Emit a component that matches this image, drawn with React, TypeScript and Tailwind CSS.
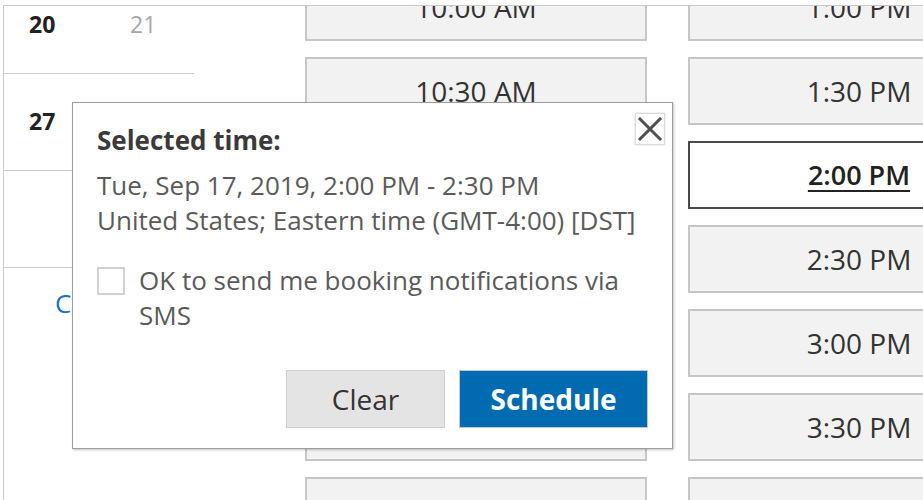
import React from 'react';

// Scheduler view: week grid on the left, time slot columns on the right,
// with the "selected time" confirmation popover laid over them.

const LEFT_SLOTS = ['10:00 AM', '10:30 AM', '11:00 AM', '11:30 AM', '12:00 PM', '12:30 PM', '1:00 PM'];
const RIGHT_SLOTS = ['1:00 PM', '1:30 PM', '2:00 PM', '2:30 PM', '3:00 PM', '3:30 PM', '4:00 PM'];
const SELECTED = '2:00 PM';

type Cell = { day?: number; muted?: boolean };

const WEEKS: Cell[][] = [
  [{ day: 20 }, { day: 21, muted: true }],
  [{ day: 27 }, { day: 28 }],
  [{}, {}],
];

function SlotButton({ label, selected }: { label: string; selected?: boolean }) {
  return (
    <button
      className={
        selected
          ? 'h-[68px] w-full shrink-0 border-2 border-[#4a4a4a] bg-white text-[27px] font-semibold text-[#222] underline underline-offset-[5px] decoration-[1.5px]'
          : 'h-[68px] w-full shrink-0 border-2 border-[#c6c6c6] bg-[#f2f2f2] text-[28px] text-[#333]'
      }
    >
      {label}
    </button>
  );
}

function SlotColumn({ slots }: { slots: string[] }) {
  return (
    <div className="-mt-[33px] flex w-[342px] shrink-0 flex-col gap-[16px]">
      {slots.map((s) => (
        <SlotButton key={s} label={s} selected={s === SELECTED} />
      ))}
    </div>
  );
}

function CloseIcon() {
  return (
    <svg width="26" height="24" viewBox="0 0 26 24" fill="none">
      <path d="M3 2 L23 22 M23 2 L3 22" stroke="#505050" strokeWidth="3" strokeLinecap="square" />
    </svg>
  );
}

function SelectedTimePopover() {
  return (
    <div className="absolute left-[72px] top-[102px] h-[347px] w-[601px] border border-[#9e9e9e] bg-white pl-[24px] pr-[24px] pt-[20px] shadow-[1px_1px_2px_rgba(0,0,0,0.25)]">
      <button className="absolute left-[562px] top-[10px] flex h-[32px] w-[30px] items-center justify-center border border-[#dcdcdc] bg-white shadow-[0_0_2px_rgba(0,0,0,0.18)]">
        <CloseIcon />
      </button>

      <div className="text-[26px] font-bold leading-[35px] text-[#3a3a3a]">Selected time:</div>

      <div className="mt-[10px] text-[26px] leading-[35px] text-[#5a5a5a]">
        <div>Tue, Sep 17, 2019, 2:00 PM - 2:30 PM</div>
        <div>United States; Eastern time (GMT-4:00) [DST]</div>
      </div>

      <label className="mt-[25px] flex items-start gap-[14px]">
        <span className="mt-[4px] h-[28px] w-[28px] shrink-0 border-2 border-[#d2d2d2] bg-white" />
        <span className="w-[508px] text-[26px] leading-[35px] text-[#5a5a5a]">
          OK to send me booking notifications via SMS
        </span>
      </label>

      <div className="mt-[37px] flex justify-end gap-[14px]">
        <button className="h-[58px] w-[159px] border border-[#cfcfcf] bg-[#e4e4e4] text-[28px] text-[#333]">
          Clear
        </button>
        <button className="h-[58px] w-[189px] border border-[#b9c9d8] bg-[#006bb0] text-[28px] font-bold text-white">
          Schedule
        </button>
      </div>
    </div>
  );
}

export default function App() {
  return (
    <div className="relative h-[500px] w-[923px] overflow-hidden bg-white font-['Open_Sans',sans-serif]">
      <div className="ml-[3px] mt-[5px] flex h-[495px] overflow-hidden border-l border-t border-[#cacaca]">
        {/* calendar weeks */}
        <div className="w-[301px] shrink-0">
          <div className="-mt-[29px] w-[190px]">
            {WEEKS.map((week, i) => (
              <div key={i} className="grid h-[97px] grid-cols-[101px_89px] border-b border-[#cacaca]">
                {week.map((c, j) => (
                  <div
                    key={j}
                    className={
                      c.muted
                        ? 'pl-[25px] pt-[33px] text-[23px] leading-[28px] text-[#a8a8a8]'
                        : 'pl-[25px] pt-[33px] text-[23px] font-bold leading-[28px] text-[#222]'
                    }
                  >
                    {c.day}
                  </div>
                ))}
              </div>
            ))}
          </div>
          <div className="mt-[18px] whitespace-nowrap pl-[51px] text-[26px] leading-[35px] text-[#1f6fc2]">
            Change time zone
          </div>
        </div>

        {/* time slots */}
        <div className="flex gap-[41px]">
          <SlotColumn slots={LEFT_SLOTS} />
          <SlotColumn slots={RIGHT_SLOTS} />
        </div>
      </div>

      <SelectedTimePopover />
    </div>
  );
}
